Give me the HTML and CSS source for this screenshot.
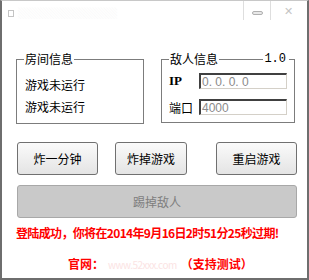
FILE: index.html
```html
<!DOCTYPE html>
<html lang="zh-CN">
  <head>
    <meta charset="UTF-8" />
    <title>窗口</title>
    <link rel="stylesheet" href="styles.css">
  </head>
  <body>
    <div class="window">
      <div class="titlebar">
        <div class="title">
          <span class="app-icon"></span>
          <span class="title-text">▒▒▒▒▒▒▒▒▒</span>
        </div>
        <div class="controls">
          <div class="ctl"><span class="min-dash"></span></div>
          <div class="ctl close">✕</div>
        </div>
      </div>

      <div class="groups">
        <div class="group room">
          <div class="legend"><span>房间信息</span></div>
          <div class="line">游戏未运行</div>
          <div class="line">游戏未运行</div>
        </div>
        <div class="group enemy">
          <div class="legend"><span>敌人信息</span><span class="ver">1.0</span></div>
          <div class="field">
            <label class="field-label ip">IP</label>
            <input class="field-input" type="text" value="0. 0. 0. 0" />
          </div>
          <div class="field">
            <label class="field-label">端口</label>
            <input class="field-input" type="text" value="4000" />
          </div>
        </div>
      </div>

      <div class="buttons">
        <button class="btn one">炸一分钟</button>
        <button class="btn two">炸掉游戏</button>
        <button class="btn three">重启游戏</button>
      </div>
      <button class="btn kick" disabled>踢掉敌人</button>

      <p class="status">登陆成功，你将在2014年9月16日2时51分25秒过期!</p>
      <p class="site">官网：<span class="url">www.52xxx.com</span>（支持测试）</p>
    </div>
  </body>
</html>
```

FILE: styles.css
```css
* {
  box-sizing: border-box;
}
body {
  margin: 0;
  background-color: #ffffff;
  font-family: "Noto Sans CJK SC", "Liberation Sans", sans-serif;
  font-size: 12px;
  color: #000;
}
.window {
  width: 309px;
  height: 280px;
  border: 2px solid #6e6e6e;
  border-top: 1px solid #c8c8c8;
  background-color: #fff;
  display: flex;
  flex-direction: column;
}
.titlebar {
  height: 20px;
  display: flex;
  justify-content: space-between;
}
.title {
  display: flex;
  align-items: center;
  padding-left: 6px;
  gap: 4px;
}
.app-icon {
  width: 6px;
  height: 7px;
  border: 1px solid #c4c4c4;
  margin-top: 4px;
}
.title-text {
  color: #f7f7f7;
  font-size: 11px;
  margin-top: 4px;
}
.controls {
  display: flex;
  margin-right: 1px;
}
.ctl {
  width: 27px;
  height: 19px;
  border-left: 1px solid #dedede;
  display: flex;
  align-items: center;
  justify-content: center;
}
.ctl.close {
  width: 36px;
  color: #c4c4c4;
  font-size: 11px;
  padding-bottom: 2px;
}
.min-dash {
  width: 11px;
  height: 4px;
  border: 1px solid #b0b0b0;
  border-radius: 2px;
  background: #e8e8e8;
  margin-top: 5px;
}
.groups {
  display: flex;
  margin-top: 38px;
  margin-left: 14px;
  gap: 17px;
}
.group {
  border: 1px solid #7c7c7c;
  padding: 0 7px;
}
.group.room {
  width: 128px;
  height: 65px;
}
.group.enemy {
  width: 134px;
  height: 64px;
}
.legend {
  display: flex;
  justify-content: space-between;
  margin-top: -9px;
  height: 16px;
  line-height: 16px;
  font-size: 12px;
}
.legend span {
  background-color: #fff;
  padding: 0 1px;
}
.legend .ver {
  font-family: "Liberation Mono", monospace;
  margin-right: -2px;
  padding: 0 3px 0 1px;
}
.room .legend {
  margin-bottom: 7px;
}
.line {
  line-height: 22px;
  padding-left: 1px;
}
.field {
  display: flex;
  align-items: center;
  height: 16px;
  margin-top: 6px;
}
.field + .field {
  margin-top: 10px;
}
.field-label {
  width: 32px;
}
.field-label.ip {
  font-family: "Liberation Serif", serif;
  font-weight: bold;
  font-size: 13px;
}
.field-input {
  width: 88px;
  height: 16px;
  padding: 0 1px;
  border: 1px solid #d4d0c8;
  border-top: 2px solid #404040;
  border-left: 2px solid #404040;
  font-family: "Liberation Sans", sans-serif;
  font-size: 12px;
  color: #8a8a8a;
  background: #fff;
}
.buttons {
  display: flex;
  margin: 18px 0 0 15px;
}
.btn {
  height: 33px;
  border: 1px solid #707070;
  border-radius: 3px;
  background: linear-gradient(#fafafa, #e4e4e4);
  font-family: "Noto Sans CJK SC", sans-serif;
  font-size: 12px;
  color: #000;
  padding: 0;
}
.btn.one {
  width: 81px;
}
.btn.two {
  width: 72px;
  margin-left: 17px;
}
.btn.three {
  width: 81px;
  margin-left: 29px;
}
.btn.kick {
  width: 280px;
  margin: 10px 0 0 15px;
  background: #c9c9c9;
  border-color: #a8a8a8;
  color: #7e7e7e;
}
.status {
  margin: 6px 0 0 14px;
  color: #ff0000;
  font-weight: bold;
  line-height: 18px;
  letter-spacing: -0.65px;
}
.site {
  margin: 13px 0 0 66px;
  color: #ff0000;
  font-weight: bold;
  line-height: 18px;
}
.url {
  color: #fbe3e3;
  font-weight: normal;
  font-size: 10px;
  letter-spacing: -0.5px;
  margin: 0 4px 0 4px;
}
```
